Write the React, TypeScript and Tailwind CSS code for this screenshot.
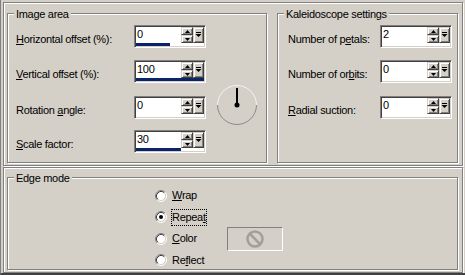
import React from 'react'

const sunken =
  'border border-t-[#808080] border-l-[#808080] border-r-white border-b-white shadow-[inset_1px_1px_0_#404040,inset_-1px_-1px_0_#d4d0c8]'
const raised =
  'border border-t-[#d4d0c8] border-l-[#d4d0c8] border-r-[#404040] border-b-[#404040] shadow-[inset_1px_1px_0_#fff,inset_-1px_-1px_0_#808080] bg-[#d4d0c8]'
const etched = 'border border-[#808080] shadow-[inset_1px_1px_0_#fff,1px_1px_0_#fff]'

function cx(...c: (string | false | undefined)[]) {
  return c.filter(Boolean).join(' ')
}

function Group({ title, className, children }: { title: string; className?: string; children?: React.ReactNode }) {
  return (
    <div className={cx('relative', etched, className)}>
      <span className="absolute left-[6px] top-[-7px] bg-[#d4d0c8] px-[2px] leading-[14px] whitespace-nowrap">{title}</span>
      {children}
    </div>
  )
}

function Arrow({ down }: { down?: boolean }) {
  return (
    <svg width="5" height="3" viewBox="0 0 5 3">
      <path d={down ? 'M0 0h5L2.5 3z' : 'M2.5 0L5 3H0z'} fill="#000" />
    </svg>
  )
}

function Spin({ value, bar }: { value: string; bar?: number }) {
  return (
    <div className={cx('w-[72px] h-[23px] bg-white p-[1px] flex flex-col shrink-0', sunken)}>
      <div className="flex h-[16px]">
        <div className="w-[45px] pl-[1px] leading-[14px]">{value}</div>
        <div className="w-[12px] flex flex-col">
          <div className={cx('h-[8px] flex items-center justify-center', raised)}>
            <Arrow />
          </div>
          <div className={cx('h-[8px] flex items-center justify-center', raised)}>
            <Arrow down />
          </div>
        </div>
        <div className={cx('w-[11px] flex items-center justify-center', raised)}>
          <svg width="7" height="6" viewBox="0 0 7 6">
            <rect x="1" y="0" width="5" height="1" fill="#000" />
            <path d="M0.5 2h6L3.5 5z" fill="#000" />
          </svg>
        </div>
      </div>
      <div className="h-[3px] bg-white">
        {bar ? <div className="h-full bg-[#0a246a]" style={{ width: bar }} /> : null}
      </div>
    </div>
  )
}

function Row({ label, value, bar, labelW, className }: { label: React.ReactNode; value: string; bar?: number; labelW: string; className?: string }) {
  return (
    <div className={cx('flex items-start h-[23px]', className)}>
      <div className={cx('pt-[7px] leading-[14px] whitespace-nowrap', labelW)}>{label}</div>
      <Spin value={value} bar={bar} />
    </div>
  )
}

function Radio({ checked }: { checked?: boolean }) {
  return (
    <svg width="12" height="12" viewBox="0 0 12 12" className="shrink-0">
      <circle cx="6" cy="6" r="4.5" fill="#fff" />
      <path d="M2.11 9.89A5.5 5.5 0 0 1 9.89 2.11" stroke="#808080" fill="none" />
      <path d="M9.89 2.11A5.5 5.5 0 0 1 2.11 9.89" stroke="#fff" fill="none" />
      <path d="M2.82 9.18A4.5 4.5 0 0 1 9.18 2.82" stroke="#404040" fill="none" />
      <path d="M9.18 2.82A4.5 4.5 0 0 1 2.82 9.18" stroke="#d4d0c8" fill="none" />
      {checked && <circle cx="6" cy="6" r="2" fill="#000" />}
    </svg>
  )
}

function RadioRow({ label, checked, focus, children }: { label: React.ReactNode; checked?: boolean; focus?: boolean; children?: React.ReactNode }) {
  return (
    <div className="flex items-center h-[21.5px]">
      <div className="flex items-center w-[72px]">
        <Radio checked={checked} />
        <span
          className={cx(
            'ml-[4px] border leading-[15px]',
            focus ? 'border-dotted border-black' : 'border-transparent'
          )}
        >
          {label}
        </span>
      </div>
      {children}
    </div>
  )
}

export default function App() {
  return (
    <div className="w-[465px] h-[275px] bg-[#d4d0c8] border-l border-l-[#808080] border-b-2 border-b-[#404040] overflow-hidden text-black font-['Liberation_Sans',Arial,sans-serif] text-[11px] tracking-[-0.3px]">
      {/* top panel */}
      <div className={cx('ml-[2px] mt-[2px] w-[460px] h-[164px] flex items-start pl-[3px] pt-[10px] gap-[10px]', etched)}>
        <Group title="Image area" className="w-[260px] h-[150px]">
          <div className="flex items-start pl-[8px] pt-[11px]">
            <div className="flex flex-col">
              <Row labelW="w-[118px]" value="0" bar={34} label={<><u>H</u>orizontal offset (%):</>} />
              <Row labelW="w-[118px]" value="100" bar={68} className="mt-[12px]" label={<><u>V</u>ertical offset (%):</>} />
              <Row labelW="w-[118px]" value="0" className="mt-[13px]" label={<>Rotation <u>a</u>ngle:</>} />
              <Row labelW="w-[118px]" value="30" bar={45} className="mt-[11px]" label={<><u>S</u>cale factor:</>} />
            </div>
            <svg width="42" height="42" viewBox="0 0 42 42" className="ml-[10px] mt-[59px]">
              <path d="M1.5 21A19.5 19.5 0 0 1 40.5 21" stroke="#f4f4f4" fill="none" />
              <path d="M40.5 21A19.5 19.5 0 0 1 1.5 21" stroke="#8a8a8a" fill="none" />
              <line x1="21" y1="4" x2="21" y2="21" stroke="#000" strokeWidth="2" />
              <circle cx="21" cy="21" r="2.5" fill="#000" />
            </svg>
          </div>
        </Group>
        <Group title="Kaleidoscope settings" className="w-[181px] h-[150px]">
          <div className="flex flex-col pl-[10px] pt-[11px]">
            <Row labelW="w-[92px]" value="2" label={<>Number of p<u>e</u>tals:</>} />
            <Row labelW="w-[92px]" value="0" className="mt-[12px]" label={<>Number of or<u>b</u>its:</>} />
            <Row labelW="w-[92px]" value="0" className="mt-[13px]" label={<><u>R</u>adial suction:</>} />
          </div>
        </Group>
      </div>

      {/* bottom panel */}
      <div className={cx('ml-[2px] mt-[1px] w-[460px] h-[106px] pl-[3px] pt-[9px]', etched)}>
        <Group title="Edge mode" className="w-[451px] h-[93px]">
          <div className="flex flex-col pl-[147px] pt-[7px]">
            <RadioRow label={<><u>W</u>rap</>} />
            <RadioRow label={<>Repea<u>t</u></>} checked focus />
            <RadioRow label={<><u>C</u>olor</>}>
              <div className="w-[56px] h-[24px] shrink-0 border border-t-[#808080] border-l-[#808080] border-r-white border-b-white flex items-center justify-center">
                <svg width="20" height="20" viewBox="0 0 20 20">
                  <circle cx="10" cy="10" r="7.5" stroke="#a39f97" strokeWidth="2.5" fill="none" />
                  <line x1="4.7" y1="4.7" x2="15.3" y2="15.3" stroke="#a39f97" strokeWidth="2.5" />
                </svg>
              </div>
            </RadioRow>
            <RadioRow label={<>Re<u>f</u>lect</>} />
          </div>
        </Group>
      </div>
    </div>
  )
}
